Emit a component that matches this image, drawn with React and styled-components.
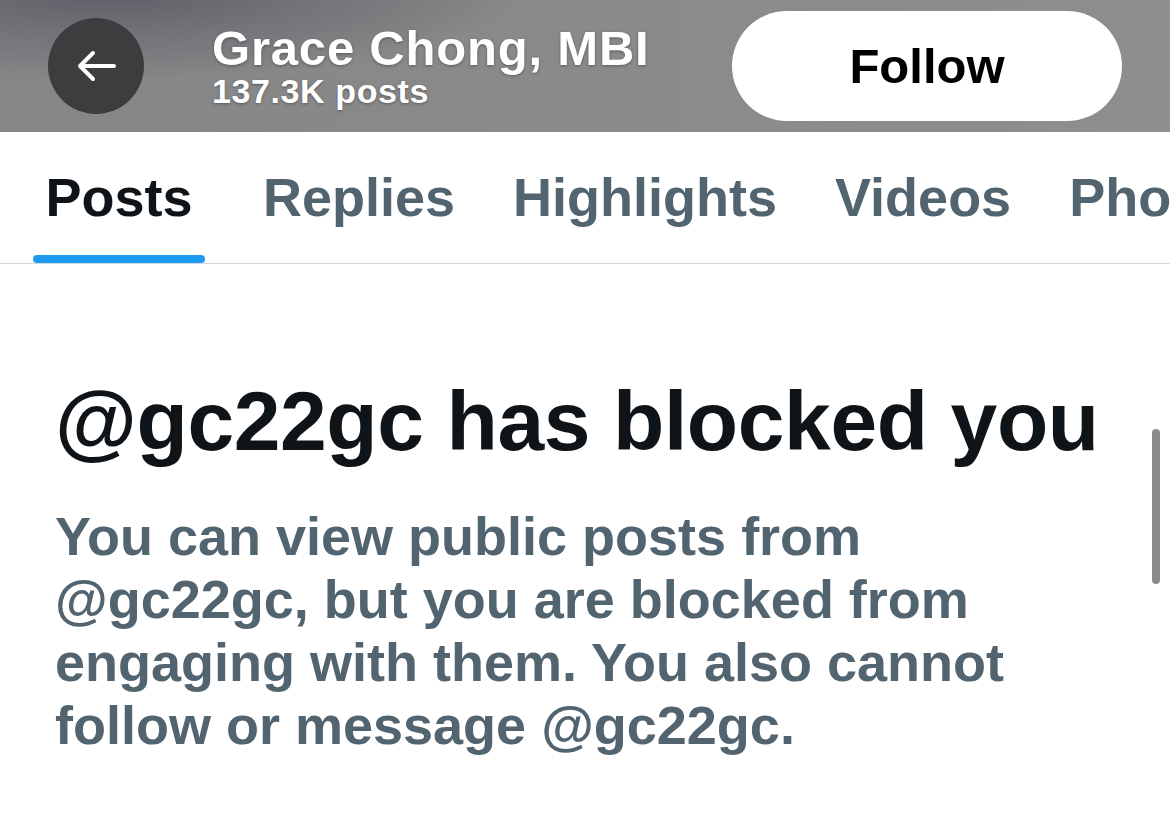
import React from "react";
import styled, { createGlobalStyle } from "styled-components";

const GlobalStyle = createGlobalStyle`
  html, body {
    margin: 0;
    padding: 0;
    background: #ffffff;
    font-family: "Liberation Sans", Arial, sans-serif;
  }
`;

const Page = styled.div`
  position: relative;
  width: 1170px;
  height: 835px;
  overflow: hidden;
  background: #ffffff;
`;

const Header = styled.header`
  height: 132px;
  display: flex;
  align-items: center;
  padding: 0 48px;
  box-sizing: border-box;
  background:
    radial-gradient(ellipse 420px 90px at 110px -10px, rgba(80, 80, 92, 0.75), rgba(80, 80, 92, 0) 100%),
    linear-gradient(90deg, #868688 0%, #8a8a8a 50%, #8e8e8e 100%);
`;

const BackButton = styled.div`
  width: 96px;
  height: 96px;
  border-radius: 50%;
  background: #3d3d40;
  display: flex;
  align-items: center;
  justify-content: center;
  flex-shrink: 0;
`;

const TitleBlock = styled.div`
  flex: 1;
  display: flex;
  flex-direction: column;
  margin-left: 68px;
  color: #ffffff;
  text-shadow: 0 1px 3px rgba(0, 0, 0, 0.35);
`;

const Name = styled.div`
  font-size: 49px;
  line-height: 50px;
  font-weight: 700;
  letter-spacing: 0.8px;
`;

const PostCount = styled.div`
  font-size: 34px;
  line-height: 36px;
  font-weight: 700;
  letter-spacing: 0.6px;
`;

const FollowButton = styled.button`
  width: 390px;
  height: 110px;
  border: none;
  border-radius: 55px;
  background: #ffffff;
  color: #000000;
  font-family: inherit;
  font-size: 49px;
  font-weight: 700;
  flex-shrink: 0;
  margin-left: -1px;
`;

const TabBar = styled.nav`
  display: flex;
  gap: 58px;
  padding-left: 33px;
  border-bottom: 1px solid #cfd9de;
  white-space: nowrap;
`;

const Tab = styled.div`
  display: flex;
  flex-direction: column;
  align-items: center;
  min-width: 172px;
  padding-top: 35px;
  flex-shrink: 0;
`;

const TabLabel = styled.span`
  font-size: 54px;
  line-height: 60px;
  font-weight: 700;
  color: ${(p) => (p.$active ? "#0f1419" : "#536471")};
`;

const Indicator = styled.div`
  margin-top: 28px;
  width: 172px;
  height: 8px;
  border-radius: 4px;
  background: ${(p) => (p.$active ? "#1d9bf0" : "transparent")};
`;

const Notice = styled.section`
  padding: 107px 0 0 55px;
`;

const Heading = styled.h1`
  margin: 0;
  font-size: 84px;
  line-height: 100px;
  font-weight: 700;
  letter-spacing: -0.4px;
  color: #0f1419;
  white-space: nowrap;
`;

const Message = styled.p`
  margin: 34px 0 0;
  max-width: 1000px;
  font-size: 54px;
  line-height: 63px;
  font-weight: 700;
  color: #536471;
`;

const Scrollbar = styled.div`
  position: absolute;
  left: 1152px;
  top: 429px;
  width: 8px;
  height: 155px;
  border-radius: 4px;
  background: #8a8a8a;
`;

const BackArrow = () => (
  <svg width="40" height="32" viewBox="0 0 40 32" fill="none">
    <path
      d="M38 16H4M17 3L4 16l13 13"
      stroke="#ffffff"
      strokeWidth="4"
      strokeLinecap="round"
      strokeLinejoin="round"
    />
  </svg>
);

const tabs = ["Posts", "Replies", "Highlights", "Videos", "Photos"];

export default function App() {
  return (
    <Page>
      <GlobalStyle />
      <Header>
        <BackButton>
          <BackArrow />
        </BackButton>
        <TitleBlock>
          <Name>Grace Chong, MBI</Name>
          <PostCount>137.3K posts</PostCount>
        </TitleBlock>
        <FollowButton>Follow</FollowButton>
      </Header>
      <TabBar>
        {tabs.map((t, i) => (
          <Tab key={t}>
            <TabLabel $active={i === 0}>{t}</TabLabel>
            <Indicator $active={i === 0} />
          </Tab>
        ))}
      </TabBar>
      <Notice>
        <Heading>@gc22gc has blocked you</Heading>
        <Message>
          You can view public posts from @gc22gc, but you are blocked from
          engaging with them. You also cannot follow or message @gc22gc.
        </Message>
      </Notice>
      <Scrollbar />
    </Page>
  );
}
